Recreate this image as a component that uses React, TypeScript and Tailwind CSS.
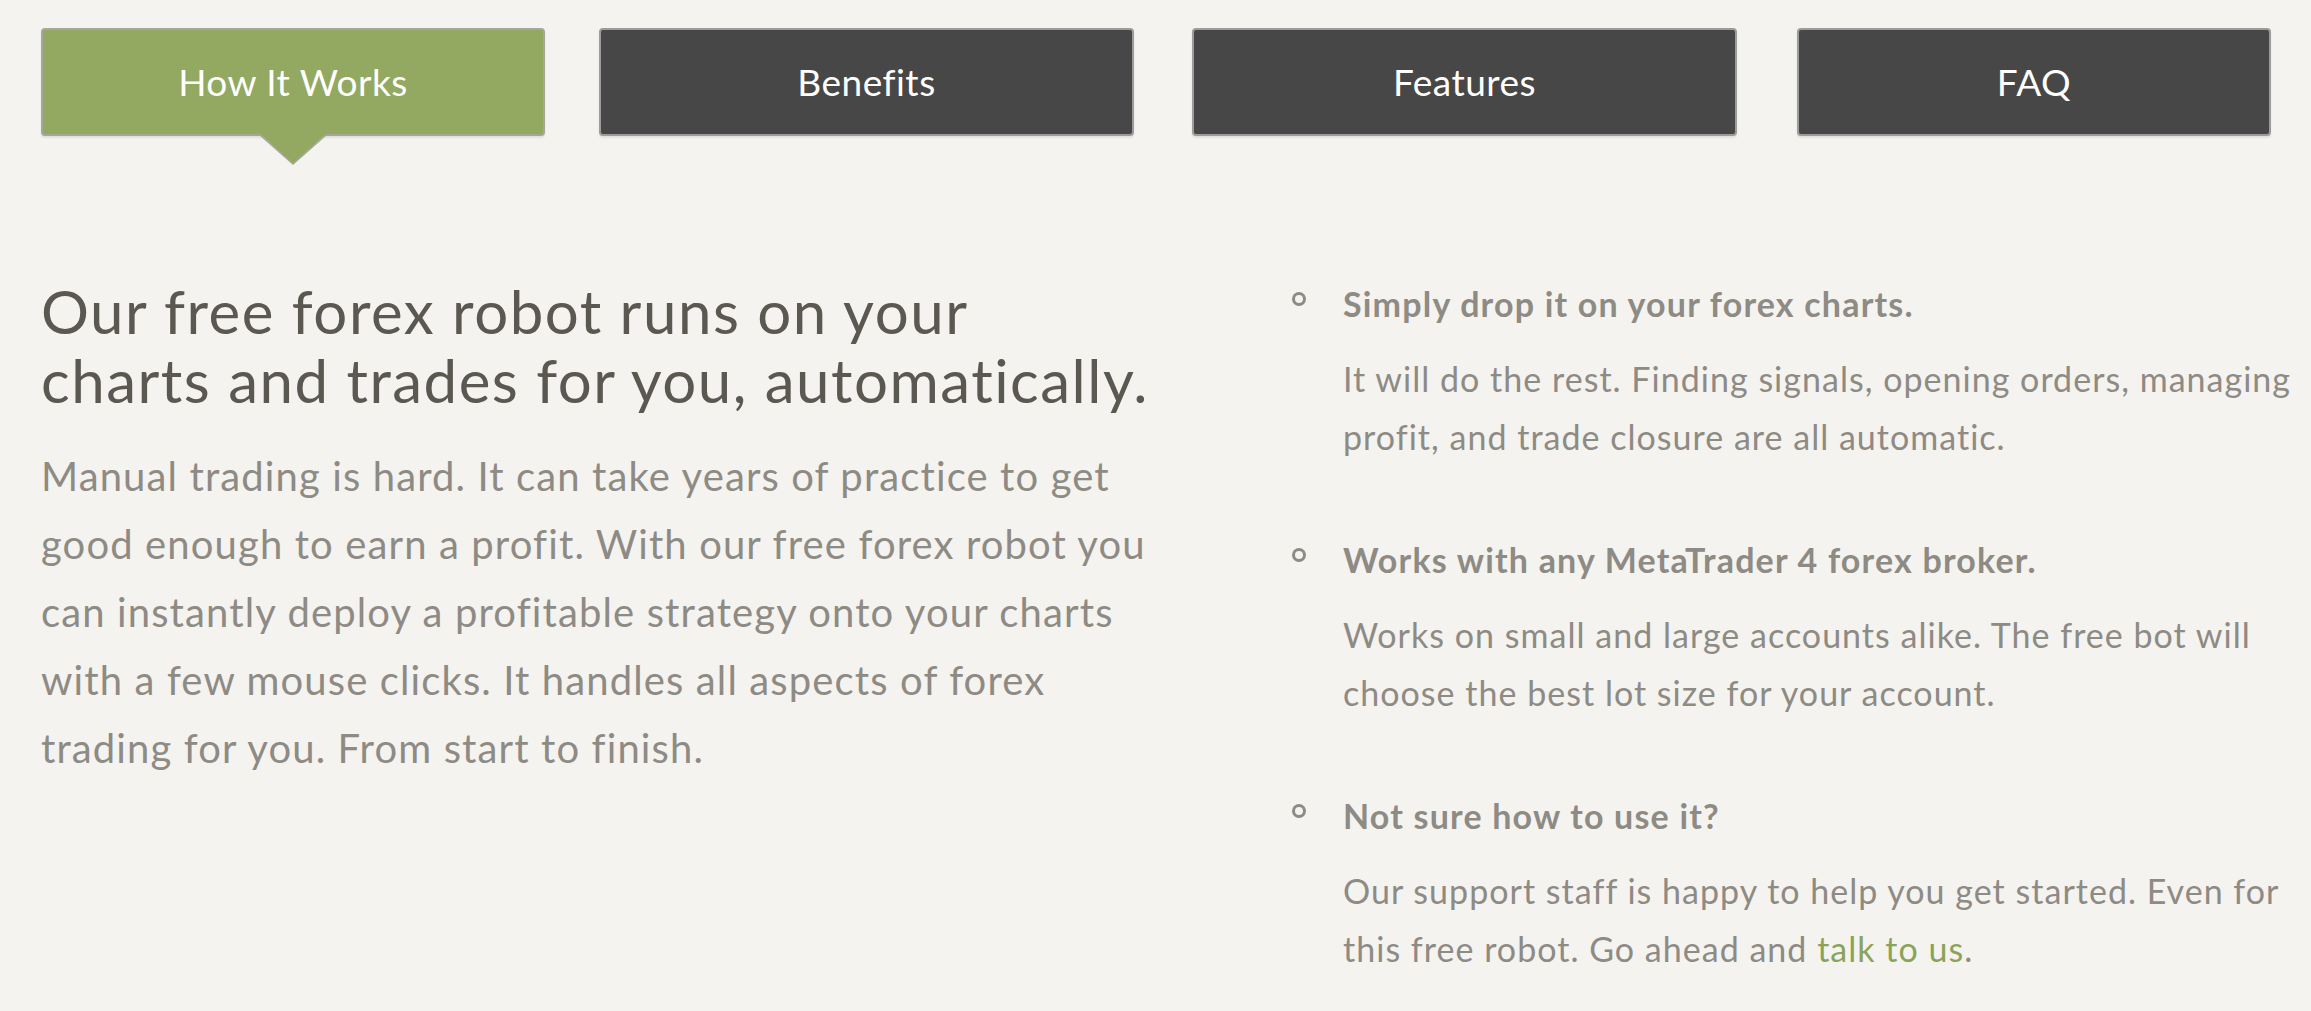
import React from "react";

const font = { fontFamily: "Lato, 'Noto Sans', sans-serif" };

function Tab({
  label,
  active,
  width,
}: {
  label: string;
  active?: boolean;
  width: string;
}) {
  return (
    <div className={`relative ${width}`}>
      <div
        className={
          active
            ? "flex h-[108px] items-center justify-center rounded-[4px] border-2 border-[#a3a89a] bg-[#93a961] text-[37px] tracking-[0.5px] text-white shadow-[0_2px_2px_rgba(0,0,0,0.08)]"
            : "flex h-[108px] items-center justify-center rounded-[4px] border-2 border-[#9c9c9a] bg-[#474747] text-[37px] tracking-[0.5px] text-white shadow-[0_2px_2px_rgba(0,0,0,0.08)]"
        }
      >
        {label}
      </div>
      {active && (
        <svg
          className="absolute left-[218px] top-[106px]"
          width="68"
          height="32"
          viewBox="0 0 68 32"
        >
          <polygon points="1,0 67,0 34,30" fill="#93a961" />
          <polyline
            points="1,1 34,30 67,1"
            fill="none"
            stroke="#a3a89a"
            strokeWidth="1.5"
          />
          <rect x="3" y="0" width="62" height="2" fill="#93a961" />
        </svg>
      )}
    </div>
  );
}

function Item({
  title,
  children,
  className,
}: {
  title: string;
  children: React.ReactNode;
  className?: string;
}) {
  return (
    <div className={`flex items-start ${className ?? ""}`}>
      <div className="mt-[8px] h-[14px] w-[14px] shrink-0 rounded-full border-[3px] border-[#8e8a84]" />
      <div className="ml-[37px]">
        <div className="whitespace-nowrap text-[34px] font-bold leading-[40px] tracking-[0.035em] text-[#8e8a84]">
          {title}
        </div>
        <div className="mt-[26px] whitespace-nowrap text-[34px] leading-[58px] tracking-[0.03em] text-[#8e8a84]">
          {children}
        </div>
      </div>
    </div>
  );
}

export default function App() {
  return (
    <div className="min-h-screen w-full bg-[#f4f3ef]" style={font}>
      <div className="flex pl-[41px] pt-[28px]">
        <Tab label="How It Works" active width="w-[504px]" />
        <div className="ml-[54px]">
          <Tab label="Benefits" width="w-[535px]" />
        </div>
        <div className="ml-[58px]">
          <Tab label="Features" width="w-[545px]" />
        </div>
        <div className="ml-[60px]">
          <Tab label="FAQ" width="w-[474px]" />
        </div>
      </div>

      <div className="flex pl-[41px] pt-[141px]">
        <div className="w-[1251px] shrink-0">
          <h1 className="whitespace-nowrap text-[60px] font-normal leading-[69px] tracking-[0.025em] text-[#5b5751]">
            Our free forex robot runs on your
            <br />
            charts and trades for you, automatically.
          </h1>
          <p className="mt-[27px] whitespace-nowrap text-[40px] leading-[68px] tracking-[0.028em] text-[#8e8a84]">
            Manual trading is hard. It can take years of practice to get
            <br />
            good enough to earn a profit. With our free forex robot you
            <br />
            can instantly deploy a profitable strategy onto your charts
            <br />
            with a few mouse clicks. It handles all aspects of forex
            <br />
            trading for you. From start to finish.
          </p>
        </div>
        <div className="flex-1 pt-[7px]">
          <Item title="Simply drop it on your forex charts.">
            It will do the rest. Finding signals, opening orders, managing
            <br />
            profit, and trade closure are all automatic.
          </Item>
          <Item
            title="Works with any MetaTrader 4 forex broker."
            className="mt-[74px]"
          >
            Works on small and large accounts alike. The free bot will
            <br />
            choose the best lot size for your account.
          </Item>
          <Item title="Not sure how to use it?" className="mt-[74px]">
            Our support staff is happy to help you get started. Even for
            <br />
            this free robot. Go ahead and{" "}
            <a href="#" className="text-[#8aa35a]">
              talk to us
            </a>
            .
          </Item>
        </div>
      </div>
    </div>
  );
}
